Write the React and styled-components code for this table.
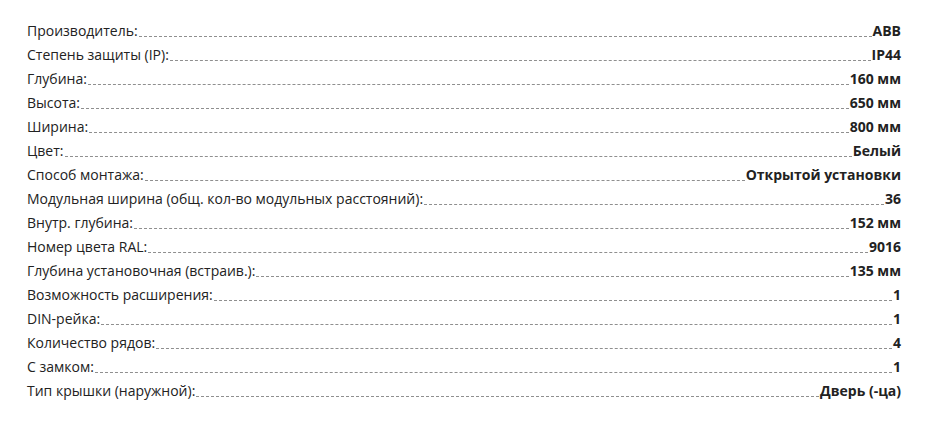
import React from "react";
import styled, { createGlobalStyle } from "styled-components";

const Global = createGlobalStyle`
  html, body { margin: 0; padding: 0; background: #fff; }
  body { font-family: "Open Sans", "Liberation Sans", sans-serif; }
`;

const List = styled.div`
  padding: 16px 25px 0 27px;
  display: flex;
  flex-direction: column;
`;

const Row = styled.div`
  display: flex;
  align-items: flex-end;
  height: 24px;
  font-size: 14px;
  line-height: 19px;
  color: #222;
`;

const Label = styled.span`
  white-space: nowrap;
`;

const Dots = styled.span`
  flex: 1;
  border-bottom: 1px dashed #8f8f8f;
  margin: 0 1px 3px;
  min-width: 10px;
`;

const Value = styled.span`
  font-weight: 700;
  white-space: nowrap;
`;

const data = [
  ["Производитель:", "ABB"],
  ["Степень защиты (IP):", "IP44"],
  ["Глубина:", "160 мм"],
  ["Высота:", "650 мм"],
  ["Ширина:", "800 мм"],
  ["Цвет:", "Белый"],
  ["Способ монтажа:", "Открытой установки"],
  ["Модульная ширина (общ. кол-во модульных расстояний):", "36"],
  ["Внутр. глубина:", "152 мм"],
  ["Номер цвета RAL:", "9016"],
  ["Глубина установочная (встраив.):", "135 мм"],
  ["Возможность расширения:", "1"],
  ["DIN-рейка:", "1"],
  ["Количество рядов:", "4"],
  ["С замком:", "1"],
  ["Тип крышки (наружной):", "Дверь (-ца)"],
];

export default function App() {
  return (
    <>
      <Global />
      <List>
        {data.map(([l, v]) => (
          <Row key={l}>
            <Label>{l}</Label>
            <Dots />
            <Value>{v}</Value>
          </Row>
        ))}
      </List>
    </>
  );
}
